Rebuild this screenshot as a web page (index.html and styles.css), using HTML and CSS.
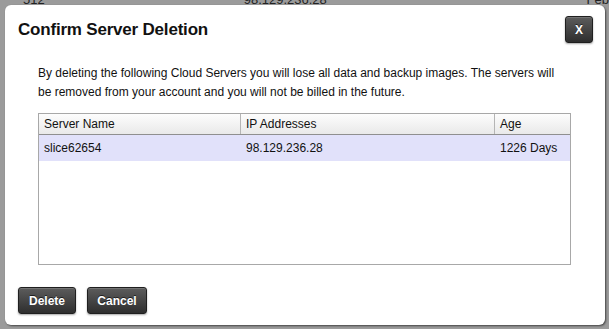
FILE: index.html
```html
<!DOCTYPE html>
<html>
<head>
<meta charset="utf-8">
<link rel="stylesheet" href="styles.css">
</head>
<body>
<div class="page">
  <div class="bg-row">
    <span class="bg-c1">512</span>
    <span class="bg-c2">98.129.236.28</span>
    <span class="bg-c3">Feb</span>
  </div>
</div>
<div class="dialog">
  <div class="dlg-head">
    <h1 class="dlg-title">Confirm Server Deletion</h1>
    <button class="btn btn-close">X</button>
  </div>
  <div class="dlg-body">
    <p class="dlg-text">By deleting the following Cloud Servers you will lose all data and backup images. The servers will be removed from your account and you will not be billed in the future.</p>
    <div class="grid">
      <div class="grid-head">
        <div class="cell c-name">Server Name</div>
        <div class="cell c-ip">IP Addresses</div>
        <div class="cell c-age">Age</div>
      </div>
      <div class="grid-row">
        <div class="cell c-name">slice62654</div>
        <div class="cell c-ip">98.129.236.28</div>
        <div class="cell c-age">1226 Days</div>
      </div>
    </div>
  </div>
  <div class="dlg-foot">
    <button class="btn btn-delete">Delete</button>
    <button class="btn btn-cancel">Cancel</button>
  </div>
</div>
</body>
</html>
```
FILE: styles.css
```css
html, body {
  margin: 0;
  padding: 0;
}
body {
  background: #9b9b9b;
  font-family: "Liberation Sans", Arial, Helvetica, sans-serif;
  color: #111;
  width: 609px;
  height: 329px;
  overflow: hidden;
  position: relative;
}
.page {
  height: 329px;
}
.bg-row {
  display: flex;
  font-size: 13px;
  line-height: 15px;
  margin-top: -8px;
  color: #222;
  white-space: nowrap;
}
.bg-c1 { margin-left: 23px; width: 222px; }
.bg-c2 { width: 345px; }

.dialog {
  position: absolute;
  left: 5px;
  top: 5px;
  width: 600px;
  height: 320px;
  background: #fff;
  border-radius: 6px;
  box-shadow: 1px 1px 2px rgba(0,0,0,0.55);
  display: flex;
  flex-direction: column;
}
.dlg-head {
  display: flex;
  align-items: center;
  justify-content: space-between;
  padding: 11px 12px 0 13px;
  height: 27px;
}
.dlg-title {
  margin: 0;
  font-size: 17px;
  font-weight: bold;
  color: #111;
  line-height: 20px;
  letter-spacing: -0.2px;
}
.btn {
  font-family: "Liberation Sans", Arial, Helvetica, sans-serif;
  font-weight: bold;
  font-size: 12px;
  color: #fff;
  background: linear-gradient(#5c5c5c, #2e2e2e);
  border: 1px solid #1f1f1f;
  border-radius: 3px;
  box-shadow: 0 1px 2px rgba(0,0,0,0.35), inset 0 1px 0 rgba(255,255,255,0.15);
  text-shadow: 0 -1px 0 rgba(0,0,0,0.6);
  padding: 0;
  height: 27px;
  cursor: pointer;
}
.btn-close { width: 28px; }
.dlg-body {
  margin: 0 34px 0 33px;
}
.dlg-text {
  margin: 21px 8px 11px 0;
  font-size: 12px;
  line-height: 19px;
  color: #111;
}
.grid {
  border: 1px solid #a8a8a8;
  height: 150px;
  font-size: 12px;
}
.grid-head {
  display: flex;
  height: 20px;
  background: linear-gradient(#fdfdfd, #e9e9e9);
  border-bottom: 1px solid #8f8f8f;
}
.grid-row {
  display: flex;
  height: 26px;
  background: #e1e1fa;
}
.cell {
  padding-left: 5px;
  display: flex;
  align-items: center;
  box-sizing: border-box;
}
.grid-head .cell { border-right: 1px solid #b5b5b5; }
.grid-head .c-age { border-right: none; }
.c-name { width: 202px; }
.c-ip { width: 254px; }
.c-age { flex: 1; }
.dlg-foot {
  display: flex;
  gap: 11px;
  padding: 0 0 0 13px;
  margin-top: 22px;
}
.btn-delete { width: 58px; }
.btn-cancel { width: 60px; }
```
